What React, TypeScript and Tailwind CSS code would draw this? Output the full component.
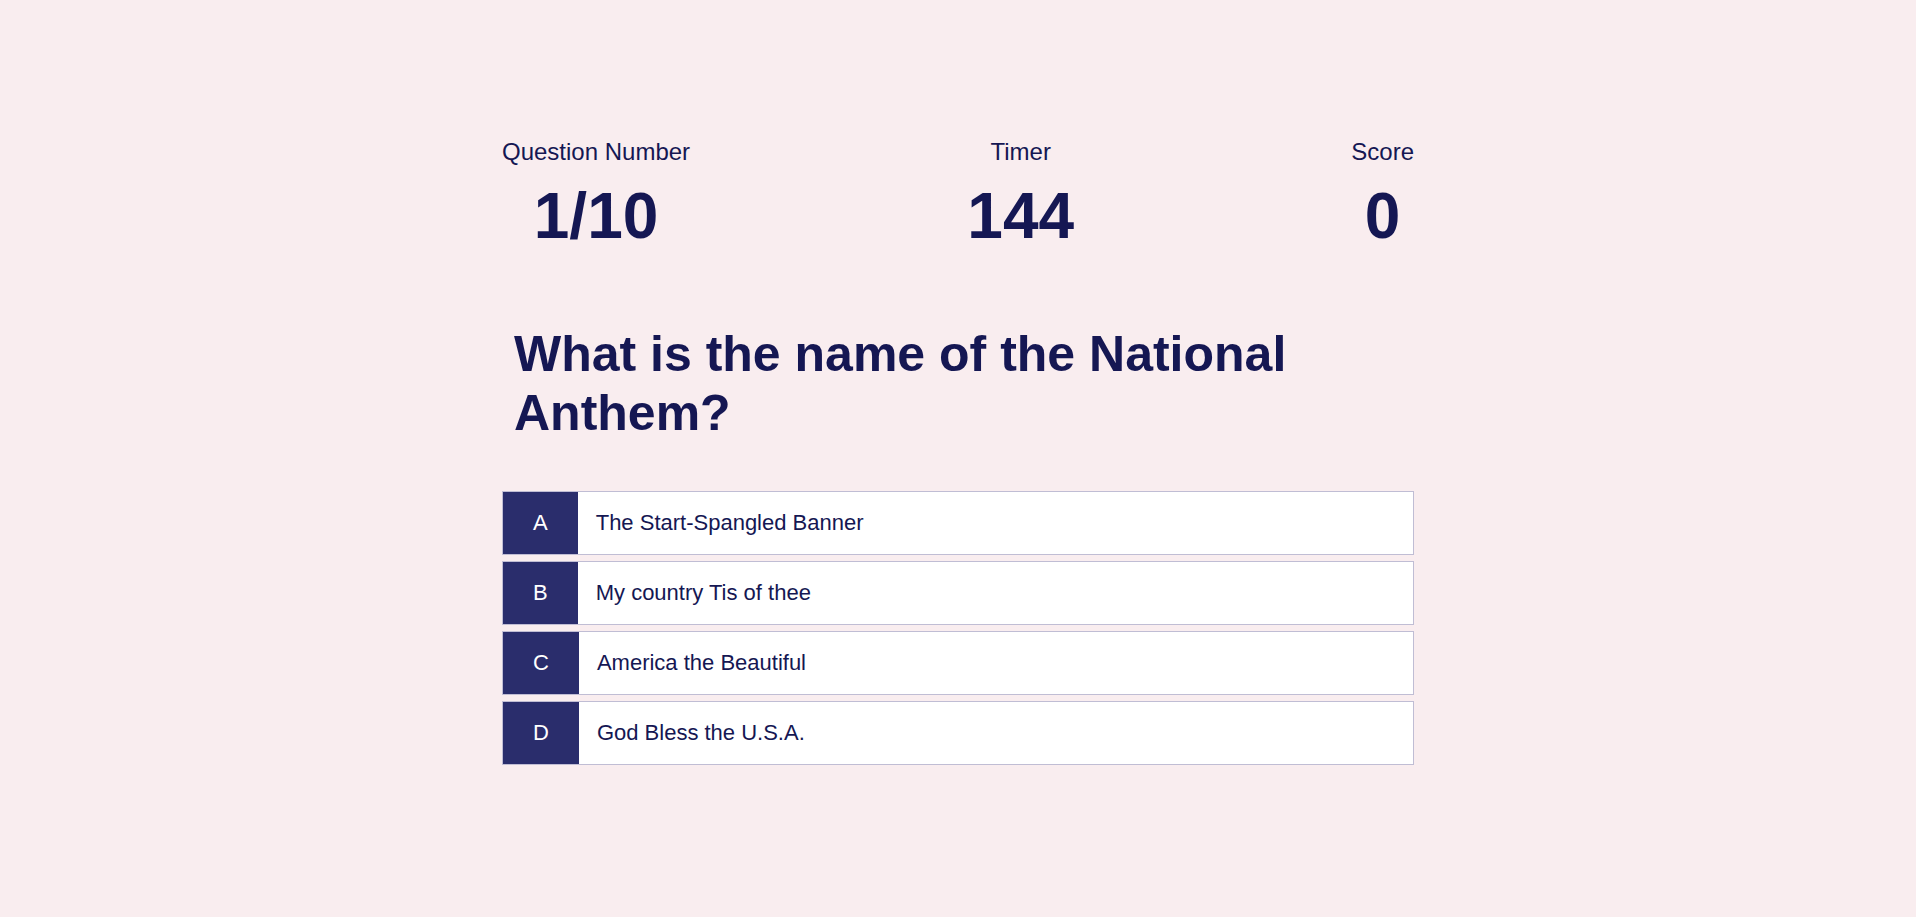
const stats = [
  { label: "Question Number", value: "1/10" },
  { label: "Timer", value: "144" },
  { label: "Score", value: "0" },
];

const choices = [
  { prefix: "A", text: "The Start-Spangled Banner" },
  { prefix: "B", text: "My country Tis of thee" },
  { prefix: "C", text: "America the Beautiful" },
  { prefix: "D", text: "God Bless the U.S.A." },
];

export default function App() {
  return (
    <main className="flex min-h-screen flex-col items-center justify-center bg-[#f9edef] px-4 pb-[14px] font-['Liberation_Sans',Arial,sans-serif] text-[#151753]">
      <div className="w-full max-w-[912px]">
        <header className="flex justify-between pb-[71px]">
          {stats.map((s) => (
            <div key={s.label} className="text-center">
              <p className="text-[24px] leading-7">{s.label}</p>
              <p className="mt-3 text-[64px] leading-[76px] font-bold">{s.value}</p>
            </div>
          ))}
        </header>
        <h1 className="mb-12 px-3 text-[50px] leading-[59px] font-bold">What is the name of the National Anthem?</h1>
        <div className="flex flex-col gap-[6px]">
          {choices.map((c) => (
            <button key={c.prefix} type="button" className="flex w-full cursor-pointer border border-[#c0bdd4] bg-white text-left text-[22px] leading-[26px]">
              <span className="bg-[#2a2d6c] px-[30px] py-[18px] text-white">{c.prefix}</span>
              <span className="px-[18px] py-[18px]">{c.text}</span>
            </button>
          ))}
        </div>
      </div>
    </main>
  );
}
